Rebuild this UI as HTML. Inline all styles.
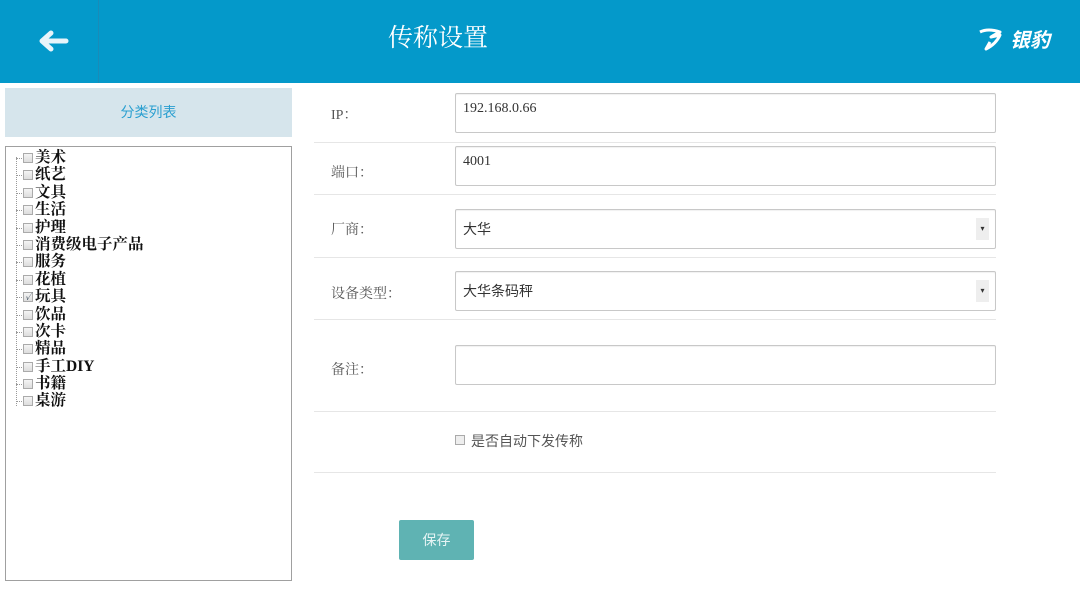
<!DOCTYPE html>
<html><head><meta charset="utf-8"><style>
*{margin:0;padding:0;box-sizing:border-box}
body{width:1080px;height:607px;background:#fff;position:relative;overflow:hidden;font-family:"Liberation Sans","Noto Sans CJK SC",sans-serif}
.a{position:absolute}
.hdr{left:0;top:0;width:1080px;height:83px;background:#0499ca}
.lab{font-size:14px;color:#555;font-family:"Liberation Serif","Noto Serif CJK SC",serif}
.inp{border:1px solid #c8c8c8;border-radius:2px;box-shadow:inset 0 1px 1px rgba(0,0,0,.06);left:455px;width:541px;height:40px;font-size:14px;color:#333;padding-left:7px}
.line{left:314px;width:682px;height:1px;background:#e6e6e6}
.tree div{height:17.4px;line-height:17.4px;font-size:15.5px;font-weight:bold;color:#111;font-family:"Liberation Serif","Noto Serif CJK SC",serif;position:relative;padding-left:30px}
.tree div:before{content:"";position:absolute;left:11px;top:9px;width:8px;border-top:1px dotted #999}
.tree div i{position:absolute;left:18px;top:4px;width:10px;height:10px;border:1px solid #aaa;background:linear-gradient(#f4f4f4,#ddd)}
.arr{left:976px;width:13px;height:22px;background:#eee;font-size:8px;color:#333;text-align:center;line-height:22px}
</style></head><body>
<div class="a hdr"></div>
<div class="a" style="left:98px;top:0;width:1px;height:83px;background:#1a8bb8"></div>
<svg class="a" style="left:37px;top:29px" width="32" height="24" viewBox="0 0 32 24"><path d="M29 12H6M14 4L5 12L14 20" stroke="#e8f4fa" stroke-width="5" fill="none" stroke-linecap="round" stroke-linejoin="round"/></svg>
<div class="a" style="left:388px;top:22px;font-size:25px;color:#fff;font-family:'Liberation Serif','Noto Serif CJK SC',serif;line-height:34px">传称设置</div>
<svg class="a" style="left:978px;top:26px" width="26" height="26" viewBox="0 0 26 26"><path d="M2 6Q10 2 22 6Q16 9 13 11L22 9Q18 18 8 23L12 16" stroke="#fff" stroke-width="3" fill="none" stroke-linejoin="round"/></svg>
<div class="a" style="left:1010px;top:28px;font-size:20px;color:#fff;font-weight:bold;font-style:italic;line-height:26px">银豹</div>
<div class="a" style="left:5px;top:88px;width:287px;height:49px;background:#d6e5ec;color:#2a9fd0;font-size:14px;text-align:center;line-height:49px">分类列表</div>
<div class="a" style="left:5px;top:146px;width:287px;height:435px;border:1px solid #a0a0a0"></div>
<div class="a" style="left:16px;top:157px;width:1px;height:249px;border-left:1px dotted #999"></div>
<div class="a tree" style="left:5px;top:149px;width:280px">
<div><i></i>美术</div><div><i></i>纸艺</div><div><i></i>文具</div><div><i></i>生活</div><div><i></i>护理</div><div><i></i>消费级电子产品</div><div><i></i>服务</div><div><i></i>花植</div><div><i style="font-size:9px;line-height:8px;text-align:center;color:#345;font-weight:normal">✓</i>玩具</div><div><i></i>饮品</div><div><i></i>次卡</div><div><i></i>精品</div><div><i></i>手工DIY</div><div><i></i>书籍</div><div><i></i>桌游</div>
</div>
<div class="a lab" style="left:331px;top:104px">IP：</div>
<div class="a inp" style="top:93px;line-height:30px;font-family:'Liberation Serif','Noto Serif CJK SC',serif">192.168.0.66</div>
<div class="a line" style="top:142px"></div>
<div class="a lab" style="left:331px;top:162px">端口：</div>
<div class="a inp" style="top:146px;line-height:30px;font-family:'Liberation Serif','Noto Serif CJK SC',serif">4001</div>
<div class="a line" style="top:194px"></div>
<div class="a lab" style="left:331px;top:219px">厂商：</div>
<div class="a inp" style="top:209px;line-height:38px">大华</div>
<div class="a arr" style="top:218px">▾</div>
<div class="a line" style="top:257px"></div>
<div class="a lab" style="left:331px;top:283px">设备类型：</div>
<div class="a inp" style="top:271px;line-height:38px">大华条码秤</div>
<div class="a arr" style="top:280px">▾</div>
<div class="a line" style="top:319px"></div>
<div class="a lab" style="left:331px;top:359px">备注：</div>
<div class="a inp" style="top:345px"></div>
<div class="a line" style="top:411px"></div>
<div class="a" style="left:455px;top:435px;width:10px;height:10px;border:1px solid #aaa;background:#eee"></div>
<div class="a" style="left:471px;top:431px;font-size:14px;color:#555">是否自动下发传称</div>
<div class="a line" style="top:472px"></div>
<div class="a" style="left:399px;top:520px;width:75px;height:40px;background:#5fb3b3;border-radius:2px;color:#e6f4f4;font-size:14px;text-align:center;line-height:40px">保存</div>
</body></html>
